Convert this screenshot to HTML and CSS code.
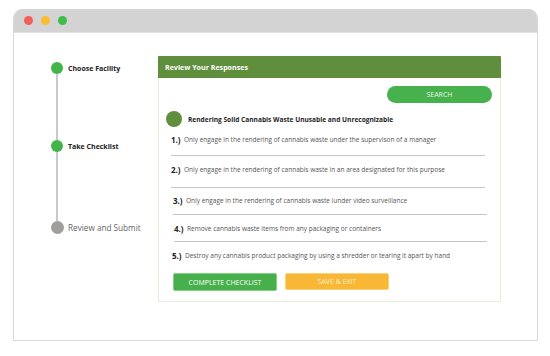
FILE: index.html
```html
<!DOCTYPE html>
<html>
<head>
<meta charset="utf-8">
<link rel="stylesheet" href="styles.css">
</head>
<body>
<div class="window">
  <div class="titlebar">
    <span class="dot red"></span><span class="dot yellow"></span><span class="dot green"></span>
  </div>
  <div class="content">
    <aside class="steps">
      <div class="step done"><span class="bullet"></span><span class="label">Choose Facility</span></div>
      <div class="connector c1"></div>
      <div class="step done"><span class="bullet"></span><span class="label">Take Checklist</span></div>
      <div class="connector c2"></div>
      <div class="step todo"><span class="bullet"></span><span class="label">Review and Submit</span></div>
    </aside>
    <section class="card">
      <header class="card-head">Review Your Responses</header>
      <div class="card-body">
        <div class="search-row"><button class="search">SEARCH</button></div>
        <div class="section-title"><span class="sec-dot"></span><span>Rendering Solid Cannabis Waste Unusable and Unrecognizable</span></div>
        <ol class="items">
          <li class="item i1"><span class="num">1.)</span><span class="txt">Only engage in the rendering of cannabis waste under the supervison of a manager</span></li>
          <li class="item i2"><span class="num">2.)</span><span class="txt">Only engage in the rendering of cannabis waste in an area designated for this purpose</span></li>
          <li class="item i3"><span class="num">3.)</span><span class="txt">Only engage in the rendering of cannabis waste iunder video surveillance</span></li>
          <li class="item i4"><span class="num">4.)</span><span class="txt">Remove cannabis waste items from any packaging or containers</span></li>
          <li class="item i5"><span class="num">5.)</span><span class="txt">Destroy any cannabis product packaging by using a shredder or tearing it apart by hand</span></li>
        </ol>
        <div class="actions">
          <button class="btn complete">COMPLETE CHECKLIST</button>
          <button class="btn save">SAVE &amp; EXIT</button>
        </div>
      </div>
    </section>
  </div>
</div>
</body>
</html>
```

FILE: styles.css
```css
* { box-sizing: border-box; }
html, body { margin: 0; padding: 0; background: #fff; }
body {
  font-family: "Open Sans", "Noto Sans", sans-serif;
  color: #222;
}
.window {
  margin: 9px 0 0 13px;
  width: 525px;
  height: 332px;
  border: 1px solid #d9d9d9;
  border-top: none;
  border-radius: 9px 9px 0 0;
  overflow: hidden;
}
.titlebar {
  height: 24px;
  background: #d3d3d3;
  display: flex;
  align-items: center;
  gap: 8px;
  padding-left: 10px;
  border-bottom: 1px solid #e2e2e2;
}
.dot { width: 9px; height: 9px; border-radius: 50%; display: block; }
.red { background: #f25f58; }
.yellow { background: #fbbe2e; }
.green { background: #3fbd48; }

.content {
  display: flex;
  padding-top: 23px;
}
.steps {
  width: 144px;
  padding-left: 37px;
  padding-top: 6px;
}
.step {
  display: flex;
  align-items: center;
  height: 12px;
}
.bullet {
  width: 12px; height: 12px; border-radius: 50%;
  flex: none;
}
.done .bullet { background: #41b548; }
.todo .bullet { background: #a09e9b; width: 13px; height: 13px; }
.label { margin-left: 5px; white-space: nowrap; }
.done .label { font-size: 7px; font-weight: 700; color: #222; }
.todo .label { font-size: 8.2px; color: #666; margin-left: 4px; }
.connector { width: 2px; background: #c9c9c9; margin-left: 5px; }
.c1 { height: 66px; }
.c2 { height: 69px; }

.card {
  width: 343px;
  height: 246px;
  border: 1px solid #e3efd6;
  border-top: none;
  display: flex;
  flex-direction: column;
}
.card-head {
  height: 22px;
  background: #5f8e3d;
  color: #fff;
  font-size: 7.1px;
  font-weight: 700;
  display: flex;
  align-items: center;
  padding-left: 7px;
  margin: 0 -1px;
  border-radius: 1px 1px 0 0;
}
.card-body { padding: 8px 8px 0 7px; }
.search-row { display: flex; justify-content: flex-end; }
.search {
  width: 105px; height: 17px;
  border: none; border-radius: 9px;
  background: #46b14d;
  color: #e8f5e8;
  font-family: inherit;
  font-size: 7px;
  padding: 0;
}
.section-title {
  display: flex; align-items: center;
  margin-top: 8px;
  font-size: 6.6px; font-weight: 700; color: #1e1e1e;
}
.sec-dot {
  width: 16px; height: 16px; border-radius: 50%;
  background: #5f8e3d;
  margin-right: 6px;
  flex: none;
}
.items { list-style: none; margin: 0 0 0 5px; padding: 0; width: 316px; }
.item {
  display: flex; align-items: flex-start;
  line-height: 10px;
  border-bottom: 1.5px solid #c6c6c6;
  font-size: 6.5px; color: #555;
}
.i1 { height: 29px; padding-top: 8px; width: 314px; }
.i2 { height: 32px; padding-top: 9px; width: 314px; }
.i3 { height: 27px; padding-top: 8px; margin-left: 2px; }
.i4 { height: 27px; padding-top: 9px; margin-left: 3px; }
.i5 { height: 28px; padding-top: 9px; margin-left: 1px; border-bottom: none; }
.num { font-size: 8px; font-weight: 700; color: #222; width: 13px; flex: none; }
.txt { white-space: nowrap; }
.actions { display: flex; gap: 8px; margin-top: 3px; margin-left: 7px; }
.btn {
  width: 104px; height: 17px;
  border-radius: 2px;
  font-family: inherit;
  font-size: 7px;
  color: #fff;
  padding: 0;
}
.complete { background: #47b04c; border: 1px solid #7fd07f; height: 18px; }
.save { background: #f8b734; border: 1px solid #fbd27c; color: #fdf0d2; }
```
